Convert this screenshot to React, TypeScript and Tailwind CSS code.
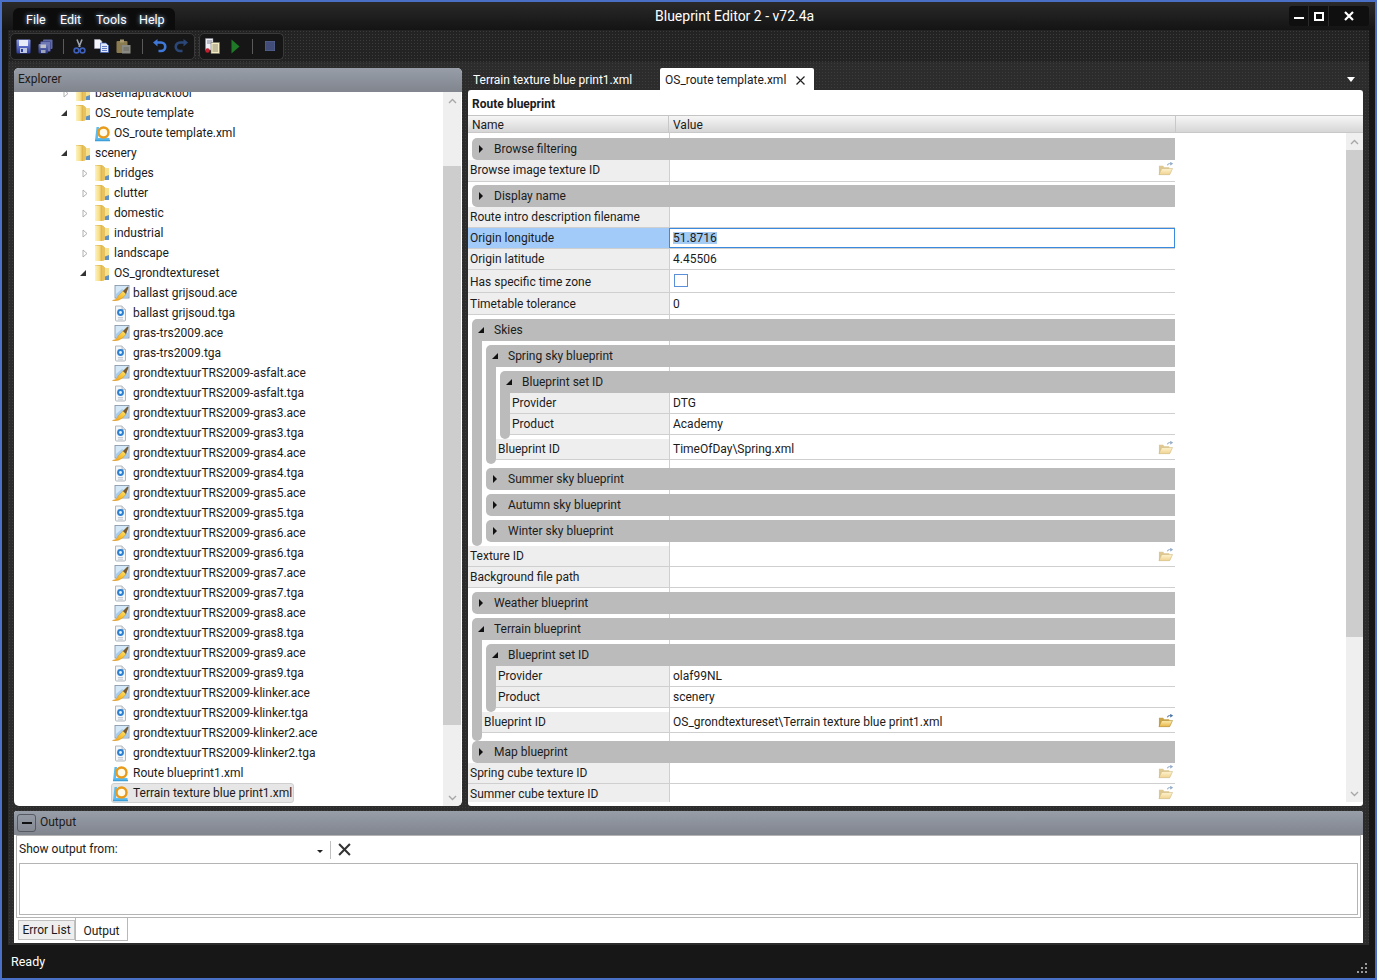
import React from "react";

const dots = "bg-[radial-gradient(#3c3c3c_0.6px,transparent_0.7px)] bg-[length:3px_3px]";

function Defs() {
  return (
    <svg className="absolute w-0 h-0">
      <defs>
        <linearGradient id="fold" x1="0" x2="1" y1="0" y2="0">
          <stop offset="0" stopColor="#fdf3c0" />
          <stop offset="0.6" stopColor="#f8df88" />
          <stop offset="1" stopColor="#dcae44" />
        </linearGradient>
        <linearGradient id="open" x1="0" x2="0" y1="0" y2="1">
          <stop offset="0" stopColor="#fdeeb0" />
          <stop offset="1" stopColor="#e8b548" />
        </linearGradient>
        <linearGradient id="blue" x1="0" x2="0" y1="0" y2="1">
          <stop offset="0" stopColor="#8a9aea" />
          <stop offset="1" stopColor="#2c3a9c" />
        </linearGradient>
        <linearGradient id="brush" x1="0" x2="1" y1="1" y2="0">
          <stop offset="0" stopColor="#f09a08" />
          <stop offset="1" stopColor="#ffe468" />
        </linearGradient>
      </defs>
    </svg>
  );
}

function Folder() {
  return (
    <svg width="16" height="18" viewBox="0 0 16 18" className="shrink-0">
      <path d="M1 2 Q1 1 2 1 H8 L10 2.5 V16.5 H2 Q1 16.5 1 15.5 Z" fill="#e3bc56" />
      <path d="M1 2.5 Q1 1.5 2 1.5 L8 2.2 V17 L2 17 Q1 17 1 16 Z" fill="url(#fold)" />
      <path d="M8 2.5 L11 3.2 V16 L8 17 Z" fill="#e8c25e" />
      <path d="M11 4 H15 V16 H11 Z" fill="#f6e08e" />
      <path d="M11 12.5 L15 11 V16 H11 Z" fill="#5f93c8" />
    </svg>
  );
}

function Ace() {
  return (
    <svg width="18" height="18" viewBox="0 0 18 18" className="shrink-0">
      <rect x="3" y="1.5" width="14" height="12.5" fill="#d4e8f8" stroke="#7f90a0" strokeWidth="0.8" />
      <path d="M4 10 L10 5 L16 9 V13.5 H4 Z" fill="#a8cdec" />
      <path d="M0.5 16.5 Q5 16 6.5 11.5 L11 7 L14 10 L10.5 14 Q6 17.8 0.5 16.5 Z" fill="url(#brush)" stroke="#c98614" strokeWidth="0.4" />
      <path d="M11 7 L15.5 2.5 L16.5 3.5 L14 10 Z" fill="#7a5a30" />
    </svg>
  );
}

function Tga() {
  return (
    <svg width="14" height="17" viewBox="0 0 14 17" className="shrink-0 ml-[1px]">
      <path d="M2.5 1 H9 L12.5 4.5 V15 Q12.5 16 11.5 16 H3.5 Q2.5 16 2.5 15 Z" fill="#f4f6f8" stroke="#a8b0b8" strokeWidth="0.9" />
      <path d="M9 1 V4.5 H12.5" fill="#dfe4ea" stroke="#a8b0b8" strokeWidth="0.7" />
      <circle cx="7.5" cy="7.5" r="3.4" fill="#2b7fd0" />
      <circle cx="7.5" cy="7.5" r="1.4" fill="#e8f2fc" />
      <path d="M5 12.5 H10 M5 14.2 H10" stroke="#b8bec6" strokeWidth="0.8" />
    </svg>
  );
}

function Xml() {
  return (
    <svg width="18" height="17" viewBox="0 0 18 17" className="shrink-0">
      <path d="M1 15.5 L2.5 2 L5 2 L4 13 H15.5 V15.5 Z" fill="#5cbcf0" />
      <circle cx="9.5" cy="7.5" r="5" fill="#fffbe8" stroke="#e89a1a" strokeWidth="2.4" />
      <path d="M1 15.5 H16" stroke="#3f9fd8" strokeWidth="1.4" />
    </svg>
  );
}

function OpenFolder({ dim }: { dim?: boolean }) {
  return (
    <svg width="15" height="14" viewBox="0 0 16 14" className={dim ? "opacity-60" : ""}>
      <path d="M1 3.5 H5.5 L6.5 5 H12 V7 H4 L1.5 13 H1 Z" fill="#c9a347" />
      <path d="M4 6.5 H15.5 L12.5 13 H1 Z" fill="url(#open)" stroke="#a98628" strokeWidth="0.6" />
      <path d="M10 3 Q11 0.8 13.5 1.2 M13 0 L15 1.3 L13 2.8" fill="none" stroke="#4f75a8" strokeWidth="1.2" />
    </svg>
  );
}

function Expanded() {
  return (
    <svg width="6" height="6" viewBox="0 0 6 6" className="shrink-0">
      <path d="M6 0 V6 H0 Z" fill="#333" />
    </svg>
  );
}
function Collapsed() {
  return (
    <svg width="6" height="9" viewBox="0 0 6 9" className="shrink-0">
      <path d="M1 1 L5 4.5 L1 8 Z" fill="#fff" stroke="#a8a8a8" strokeWidth="0.9" />
    </svg>
  );
}
function GroupOpen() {
  return (
    <svg width="6" height="6" viewBox="0 0 6 6" className="shrink-0">
      <path d="M6 0 V6 H0 Z" fill="#111" />
    </svg>
  );
}
function GroupClosed() {
  return (
    <svg width="4" height="8" viewBox="0 0 4 8" className="shrink-0">
      <path d="M0 0 L4 4 L0 8 Z" fill="#111" />
    </svg>
  );
}

type TreeItem = { t: string; l: 0 | 1 | 2; i: "folder" | "ace" | "tga" | "xml"; a?: "open" | "closed"; sel?: boolean };

const tree: TreeItem[] = [
  { t: "basemaptracktool", l: 0, i: "folder", a: "closed" },
  { t: "OS_route template", l: 0, i: "folder", a: "open" },
  { t: "OS_route template.xml", l: 1, i: "xml" },
  { t: "scenery", l: 0, i: "folder", a: "open" },
  { t: "bridges", l: 1, i: "folder", a: "closed" },
  { t: "clutter", l: 1, i: "folder", a: "closed" },
  { t: "domestic", l: 1, i: "folder", a: "closed" },
  { t: "industrial", l: 1, i: "folder", a: "closed" },
  { t: "landscape", l: 1, i: "folder", a: "closed" },
  { t: "OS_grondtextureset", l: 1, i: "folder", a: "open" },
  { t: "ballast grijsoud.ace", l: 2, i: "ace" },
  { t: "ballast grijsoud.tga", l: 2, i: "tga" },
  { t: "gras-trs2009.ace", l: 2, i: "ace" },
  { t: "gras-trs2009.tga", l: 2, i: "tga" },
  ...["asfalt", "gras3", "gras4", "gras5", "gras6", "gras7", "gras8", "gras9", "klinker", "klinker2"].flatMap((n) => [
    { t: `grondtextuurTRS2009-${n}.ace`, l: 2 as const, i: "ace" as const },
    { t: `grondtextuurTRS2009-${n}.tga`, l: 2 as const, i: "tga" as const },
  ]),
  { t: "Route blueprint1.xml", l: 2, i: "xml" },
  { t: "Terrain texture blue print1.xml", l: 2, i: "xml", sel: true },
];

const indent = ["pl-[46px]", "pl-[65px]", "pl-[84px]"];

function TreeRow({ item }: { item: TreeItem }) {
  const Icon = { folder: Folder, ace: Ace, tga: Tga, xml: Xml }[item.i];
  return (
    <div className={`flex h-5 items-center ${indent[item.l]}`}>
      <div className="flex w-[14px] shrink-0 items-center justify-start pl-[1px]">
        {item.a === "open" && <Expanded />}
        {item.a === "closed" && <span className="pl-[2px] flex"><Collapsed /></span>}
      </div>
      <div className={`flex h-[20px] items-center ${item.sel ? "bg-[#e6e6e6] rounded-[3px] border border-[#cfcfcf] pr-[1px] -ml-[1px]" : ""}`}>
        <div className={`flex w-[20px] shrink-0 justify-start ${item.l === 2 ? "" : "pl-[1px]"}`}>
          <Icon />
        </div>
        <span className="whitespace-nowrap pl-[1px]">{item.t}</span>
      </div>
    </div>
  );
}

function Scrollbar({ thumbTop, thumb, w }: { thumbTop: string; thumb: string; w: string }) {
  return (
    <div className={`relative flex flex-col ${w} shrink-0 bg-[#efefef]`}>
      <div className="flex h-[17px] items-center justify-center">
        <svg width="9" height="6" viewBox="0 0 9 6"><path d="M1 5 L4.5 1.5 L8 5" fill="none" stroke="#a8a8a8" strokeWidth="1.4" /></svg>
      </div>
      <div className={thumbTop} />
      <div className={`${thumb} bg-[#cdcdcd]`} />
      <div className="flex-1" />
      <div className="flex h-[17px] items-center justify-center">
        <svg width="9" height="6" viewBox="0 0 9 6"><path d="M1 1 L4.5 4.5 L8 1" fill="none" stroke="#a8a8a8" strokeWidth="1.4" /></svg>
      </div>
    </div>
  );
}

function Row({ name, value, h, folder, dim, textPad }: {
  name: string; value?: string; h: string; folder?: boolean; dim?: boolean; textPad?: string;
}) {
  return (
    <div className={`flex ${h} shrink-0 border-b border-[#cfcfcf]`}>
      <div className={`flex min-w-0 flex-1 items-center bg-[#eeeeee] pl-[2px] ${textPad ?? ""}`}>
        <span className="whitespace-nowrap">{name}</span>
      </div>
      <div className={`flex w-[506px] shrink-0 items-center border-l border-[#cfcfcf] pl-[3px] pr-[2px] ${textPad ?? ""}`}>
        <span className="whitespace-nowrap">{value}</span>
        {folder && <span className="ml-auto mb-[3px] flex"><OpenFolder dim={dim} /></span>}
      </div>
    </div>
  );
}

function Gap({ h }: { h: string }) {
  return (
    <div className={`flex ${h} shrink-0`}>
      <div className="flex-1" />
      <div className="w-[506px] shrink-0 border-l border-[#cfcfcf]" />
    </div>
  );
}

function GroupHead({ title, open }: { title: string; open?: boolean }) {
  return (
    <div className={`flex h-[22px] shrink-0 items-center rounded-tl-[5px] ${open ? "" : "rounded-bl-[5px]"} bg-[#bbbbbb]`}>
      <div className="flex w-[22px] shrink-0 items-center justify-center pr-[4px]">
        {open ? <GroupOpen /> : <GroupClosed />}
      </div>
      <span className="whitespace-nowrap">{title}</span>
    </div>
  );
}

function Bar({ children }: { children: React.ReactNode }) {
  return (
    <div className="flex">
      <div className="w-[10px] shrink-0 rounded-b-[5px] bg-[#bbbbbb]" />
      <div className="flex min-w-0 flex-1 flex-col">{children}</div>
    </div>
  );
}

function PropertyGrid() {
  return (
    <div className="flex min-h-0 flex-1 flex-col overflow-hidden">
      <Gap h="h-[5px]" />
      <div className="pl-[4px]"><GroupHead title="Browse filtering" /></div>
      <Row name="Browse image texture ID" h="h-[22px]" folder dim textPad="pb-[1px]" />
      <Gap h="h-[3px]" />
      <div className="pl-[4px]"><GroupHead title="Display name" /></div>
      <Row name="Route intro description filename" h="h-[21px]" />
      <div className="flex h-[21px] shrink-0 border-b border-[#cfcfcf]">
        <div className="flex min-w-0 flex-1 items-center bg-[#a3cbf9] pl-[2px]"><span>Origin longitude</span></div>
        <div className="flex w-[506px] shrink-0 items-center border border-[#3a8be0] pl-[3px]">
          <span className="bg-[#a3cbf3]">51.8716</span>
        </div>
      </div>
      <Row name="Origin latitude" value="4.45506" h="h-[21px]" />
      <div className="flex h-[23px] shrink-0 border-b border-[#cfcfcf]">
        <div className="flex min-w-0 flex-1 items-center bg-[#eeeeee] pl-[2px] pt-[2px]"><span>Has specific time zone</span></div>
        <div className="flex w-[506px] shrink-0 items-center border-l border-[#cfcfcf] pl-[4px]">
          <span className="mb-[2px] block h-[13px] w-[14px] border border-[#5b8fd8] bg-white" />
        </div>
      </div>
      <Row name="Timetable tolerance" value="0" h="h-[22px]" />
      <Gap h="h-[4px]" />
      <div className="pl-[4px]">
        <GroupHead title="Skies" open />
        <Bar>
          <div className="pl-[4px]">
            <Gap h="h-[4px]" />
            <GroupHead title="Spring sky blueprint" open />
            <Bar>
              <div className="pl-[4px]">
                <Gap h="h-[4px]" />
                <GroupHead title="Blueprint set ID" open />
                <Bar>
                  <Row name="Provider" value="DTG" h="h-[21px]" />
                  <Row name="Product" value="Academy" h="h-[21px]" />
                  <Gap h="h-[4px]" />
                </Bar>
              </div>
              <Row name="Blueprint ID" value="TimeOfDay\Spring.xml" h="h-[21px]" folder dim />
              <Gap h="h-[4px]" />
            </Bar>
            <Gap h="h-[4px]" />
            <GroupHead title="Summer sky blueprint" />
            <Gap h="h-[4px]" />
            <GroupHead title="Autumn sky blueprint" />
            <Gap h="h-[4px]" />
            <GroupHead title="Winter sky blueprint" />
            <Gap h="h-[4px]" />
          </div>
        </Bar>
      </div>
      <Row name="Texture ID" h="h-[21px]" folder dim />
      <Row name="Background file path" h="h-[21px]" />
      <Gap h="h-[4px]" />
      <div className="pl-[4px]"><GroupHead title="Weather blueprint" /></div>
      <Gap h="h-[4px]" />
      <div className="pl-[4px]">
        <GroupHead title="Terrain blueprint" open />
        <Bar>
          <div className="pl-[4px]">
            <Gap h="h-[4px]" />
            <GroupHead title="Blueprint set ID" open />
            <Bar>
              <Row name="Provider" value="olaf99NL" h="h-[21px]" />
              <Row name="Product" value="scenery" h="h-[21px]" />
              <Gap h="h-[4px]" />
            </Bar>
          </div>
          <Row name="Blueprint ID" value="OS_grondtextureset\Terrain texture blue print1.xml" h="h-[21px]" folder />
          <Gap h="h-[8px]" />
        </Bar>
      </div>
      <div className="pl-[4px]"><GroupHead title="Map blueprint" /></div>
      <Row name="Spring cube texture ID" h="h-[21px]" folder dim />
      <Row name="Summer cube texture ID" h="h-[21px]" folder dim />
    </div>
  );
}

function ToolBtn({ children, cls }: { children: React.ReactNode; cls?: string }) {
  return <div className={`flex h-5 w-[22px] items-center justify-center ${cls ?? ""}`}>{children}</div>;
}

function Toolbar() {
  return (
    <div className={`flex h-[32px] shrink-0 items-center gap-[4px] pl-[2px] bg-[#232323] ${dots}`}>
      <div className="flex h-[27px] items-center rounded-[5px] border border-[#3a3a3a] bg-[#161616] pl-[1px] pr-[2px]">
        <ToolBtn>
          <svg width="15" height="15" viewBox="0 0 15 15"><rect x="0.5" y="0.5" width="14" height="14" rx="1" fill="url(#blue)" /><rect x="3" y="1" width="9" height="6" fill="#e8ecf8" /><rect x="4" y="9" width="7" height="5" fill="#c0c8e0" /><rect x="5" y="10" width="2" height="3" fill="#2c3a9c" /></svg>
        </ToolBtn>
        <ToolBtn>
          <svg width="15" height="15" viewBox="0 0 15 15" className="opacity-80"><rect x="5" y="0.5" width="9.5" height="9.5" rx="1" fill="#7480c8" /><rect x="2.5" y="2.5" width="10" height="10" rx="1" fill="#8490d8" stroke="#30389a" strokeWidth="0.5" /><rect x="0.5" y="5" width="9.5" height="9.5" rx="1" fill="url(#blue)" /><rect x="2.5" y="5.5" width="5.5" height="3.5" fill="#e8ecf8" /><rect x="3" y="11" width="4.5" height="3" fill="#c0c8e0" /></svg>
        </ToolBtn>
        <div className="ml-[7px] mr-[4px] h-[15px] w-px bg-[#5a5a5a]" />
        <ToolBtn>
          <svg width="13" height="15" viewBox="0 0 13 15"><path d="M4 0.5 L7 8 M9 0.5 L6 8" stroke="#9ca3ad" strokeWidth="1.6" /><circle cx="3.5" cy="11.5" r="2.4" fill="none" stroke="#3d5fb8" strokeWidth="1.6" /><circle cx="9.5" cy="11.5" r="2.4" fill="none" stroke="#3d5fb8" strokeWidth="1.6" /></svg>
        </ToolBtn>
        <ToolBtn>
          <svg width="15" height="14" viewBox="0 0 15 14"><path d="M0.5 0.5 H6 L8 2.5 V9.5 H0.5 Z" fill="#f4f6fb" stroke="#aab" strokeWidth="0.5" /><path d="M6.5 4 H12 L14.5 6.5 V13.5 H6.5 Z" fill="#dfe7f8" stroke="#3d5fb8" strokeWidth="0.7" /><path d="M8 7.5 H13 M8 9.5 H13 M8 11.5 H13" stroke="#3d5fb8" strokeWidth="0.8" /></svg>
        </ToolBtn>
        <ToolBtn>
          <svg width="15" height="15" viewBox="0 0 15 15"><rect x="0.5" y="2" width="11" height="12" rx="1" fill="#8a7a50" /><rect x="4" y="0.5" width="4" height="3" fill="#a89a70" /><rect x="6" y="6" width="8.5" height="8.5" fill="#8a8a84" /><path d="M7.5 9 H13 M7.5 11 H13" stroke="#5a5a54" strokeWidth="0.8" /></svg>
        </ToolBtn>
        <div className="ml-[8px] mr-[5px] h-[15px] w-px bg-[#5a5a5a]" />
        <ToolBtn>
          <svg width="15" height="15" viewBox="0 0 15 15"><path d="M4 3.5 H9 A4.2 4.2 0 0 1 9 12 H6.5" fill="none" stroke="#3f78d8" strokeWidth="2.6" /><path d="M5.5 0 V7.5 L1 3.5 Z" fill="#3f78d8" /></svg>
        </ToolBtn>
        <ToolBtn>
          <svg width="15" height="15" viewBox="0 0 15 15" className="opacity-50"><path d="M11 3.5 H6 A4.2 4.2 0 0 0 6 12 H8.5" fill="none" stroke="#3f78d8" strokeWidth="2.6" /><path d="M9.5 0 V7.5 L14 3.5 Z" fill="#3f78d8" /></svg>
        </ToolBtn>
      </div>
      <div className="flex h-[27px] items-center rounded-[5px] border border-[#3a3a3a] bg-[#161616] pl-[1px] pr-[2px]">
        <ToolBtn>
          <svg width="16" height="16" viewBox="0 0 16 16"><path d="M1.5 0.5 H9 V12 H1.5 Z" fill="#eef0f6" stroke="#889" strokeWidth="0.5" /><path d="M3 3 H8 M3 5 H8" stroke="#556" strokeWidth="0.7" /><path d="M7 4.5 H15.5 V15.5 H7 Z" fill="#f6ecc4" stroke="#776" strokeWidth="0.6" /><path d="M8.5 7 H14 M8.5 9 H14 M8.5 11 H14 M8.5 13 H14" stroke="#665" strokeWidth="0.7" /><circle cx="3.5" cy="12.5" r="2.3" fill="#c02030" /></svg>
        </ToolBtn>
        <ToolBtn cls="ml-[1px]">
          <svg width="9" height="15" viewBox="0 0 9 15"><path d="M0.5 0.5 L8.5 7.5 L0.5 14.5 Z" fill="#1f7a28" /></svg>
        </ToolBtn>
        <div className="ml-[6px] mr-[6px] h-[15px] w-px bg-[#5a5a5a]" />
        <ToolBtn>
          <svg width="10" height="10" viewBox="0 0 10 10"><rect width="10" height="10" fill="#414c78" stroke="#5a6894" /></svg>
        </ToolBtn>
      </div>
    </div>
  );
}

export default function App() {
  return (
    <div className={`flex h-[980px] w-[1377px] flex-col overflow-hidden border-2 border-[#4a6fc6] bg-[#171717] text-[12px] leading-none text-[#1b1b1b] [font-family:Roboto,'Noto_Sans',sans-serif]`}>
      <Defs />
      {/* Title bar */}
      <div className="flex h-[28px] shrink-0 bg-gradient-to-b from-[#2a2a2a] to-[#141414]">
        <div className="ml-[11px] mt-[6px] flex h-[22px] w-[162px] items-center rounded-t-[6px] bg-[#0c0c0c] pl-[13px] pt-[2px] text-[12.5px] text-white [text-shadow:0_0_4px_#9cc4ff]">
          <span className="w-[34px]">File</span>
          <span className="w-[36px]">Edit</span>
          <span className="w-[43px]">Tools</span>
          <span>Help</span>
        </div>
        <div className="flex-1 pl-[480px] pt-[7px] text-[14px] text-white">Blueprint Editor 2 - v72.4a</div>
        <div className="mr-[6px] mt-[4px] flex h-[20px] w-[80px] items-center rounded-[3px] bg-[#0f0f0f] text-white">
          <div className="flex h-full w-[20px] items-center justify-center border-r border-[#2a2a2a]"><div className="mt-[4px] h-[2px] w-[10px] bg-white" /></div>
          <div className="flex h-full w-[20px] items-center justify-center border-r border-[#2a2a2a]"><div className="h-[9px] w-[10px] border-2 border-white" /></div>
          <div className="flex flex-1 items-center justify-center">
            <svg width="10" height="10" viewBox="0 0 10 10"><path d="M1 1 L9 9 M9 1 L1 9" stroke="#fff" strokeWidth="2.2" /></svg>
          </div>
        </div>
      </div>

      {/* Inner frame */}
      <div className="mx-[6px] flex min-h-0 flex-1 flex-col">
        <Toolbar />
        <div className={`flex min-h-0 flex-1 flex-col bg-[#2c2c2c] px-[6px] pt-[6px] ${dots}`}>
          <div className="flex h-[738px] shrink-0 gap-[6px]">
            {/* Explorer */}
            <div className="flex w-[448px] shrink-0 flex-col overflow-hidden rounded-t-[5px] rounded-b-[5px] bg-white">
              <div className="flex h-[24px] shrink-0 items-center bg-gradient-to-b from-[#989ea8] to-[#80858e] pl-[4px] pb-[2px]">Explorer</div>
              <div className="flex min-h-0 flex-1">
                <div className="min-w-0 flex-1 overflow-hidden">
                  <div className="-mt-[9px]">
                    {tree.map((it) => <TreeRow key={it.t} item={it} />)}
                  </div>
                </div>
                <div className="flex w-[19px] shrink-0 pr-px">
                  <Scrollbar w="w-full" thumbTop="h-[57px]" thumb="h-[559px]" />
                </div>
              </div>
            </div>

            {/* Document */}
            <div className="flex min-w-0 flex-1 flex-col">
              <div className="flex h-[22px] shrink-0 items-end">
                <div className="flex h-[22px] w-[192px] items-center pl-[5px] pt-[2px] text-white">Terrain texture blue print1.xml</div>
                <div className="flex h-[22px] w-[154px] items-center rounded-t-[2px] bg-white pl-[5px] pt-[2px]">
                  <span>OS_route template.xml</span>
                  <svg className="ml-[10px]" width="9" height="9" viewBox="0 0 9 9"><path d="M0.5 0.5 L8.5 8.5 M8.5 0.5 L0.5 8.5" stroke="#222" strokeWidth="1.2" /></svg>
                </div>
                <div className="mb-[8px] ml-auto mr-[8px]">
                  <svg width="8" height="5" viewBox="0 0 8 5"><path d="M0 0 H8 L4 5 Z" fill="#fff" /></svg>
                </div>
              </div>
              <div className="flex min-h-0 flex-1 flex-col overflow-hidden rounded-[3px] bg-white">
                <div className="flex h-[26px] shrink-0 items-center border-b border-[#c4c4c4] pl-[4px] pt-[3px] font-bold">Route blueprint</div>
                <div className="flex h-[17px] shrink-0 border-b border-[#c8c8c8] bg-gradient-to-b from-[#f6f6f6] to-[#d6d6d6]">
                  <div className="flex w-[201px] items-center border-r border-[#c8c8c8] pl-[4px] pt-[2px]">Name</div>
                  <div className="flex w-[507px] items-center border-r border-[#c8c8c8] pl-[4px] pt-[2px]">Value</div>
                </div>
                <div className="flex min-h-0 flex-1 pb-[4px]">
                  <div className="flex min-h-0 w-[707px] shrink-0 flex-col"><PropertyGrid /></div>
                  <div className="flex-1" />
                  <Scrollbar w="w-[17px]" thumbTop="h-0" thumb="h-[487px]" />
                </div>
              </div>
            </div>
          </div>

          {/* Output */}
          <div className="mt-[5px] flex h-[132px] shrink-0 flex-col overflow-hidden rounded-t-[3px] bg-white">
            <div className="flex h-[24px] shrink-0 items-center bg-gradient-to-b from-[#989ea8] to-[#80858e] pl-[3px]">
              <div className="flex h-[18px] w-[19px] items-center justify-center rounded-[3px] border border-[#555a62]">
                <div className="h-[2px] w-[10px] bg-[#111]" />
              </div>
              <span className="pb-[2px] pl-[4px]">Output</span>
            </div>
            <div className="mx-[2px] flex h-[83px] flex-col border border-[#b4b4b4] pb-[2px]">
              <div className="flex h-[27px] shrink-0 items-center pl-[2px]">
                <span className="w-[298px] pb-[2px]">Show output from:</span>
                <svg className="mt-[3px]" width="6" height="3" viewBox="0 0 6 3"><path d="M0 0 H6 L3 3 Z" fill="#222" /></svg>
                <div className="ml-[7px] h-[18px] w-px bg-[#c0c0c0]" />
                <svg className="ml-[7px]" width="13" height="13" viewBox="0 0 12 12"><path d="M1 1 L11 11 M11 1 L1 11" stroke="#333" strokeWidth="1.9" /></svg>
              </div>
              <div className="mx-[2px] flex-1 border border-[#b4b4b4]" />
            </div>
            <div className="flex flex-1 pl-[4px]">
              <div className="mt-[2px] flex h-[20px] w-[57px] items-center justify-center border border-[#c0c0c0] bg-[#eeeeee]">Error List</div>
              <div className="flex h-[23px] w-[53px] items-center justify-center border border-t-0 border-[#b8b8b8] bg-white pt-[3px]">Output</div>
            </div>
          </div>
        </div>
        <div className="flex h-[33px] shrink-0 items-center pl-[3px] pt-[1px] text-[12.5px] text-white">
          <span>Ready</span>
          <svg className="ml-auto mr-[2px] mt-[12px]" width="12" height="12" viewBox="0 0 12 12">
            <path d="M10 1 h2 v2 h-2 Z M6 5 h2 v2 h-2 Z M10 5 h2 v2 h-2 Z M2 9 h2 v2 h-2 Z M6 9 h2 v2 h-2 Z M10 9 h2 v2 h-2 Z" fill="#9a9a9a" />
          </svg>
        </div>
      </div>
    </div>
  );
}
